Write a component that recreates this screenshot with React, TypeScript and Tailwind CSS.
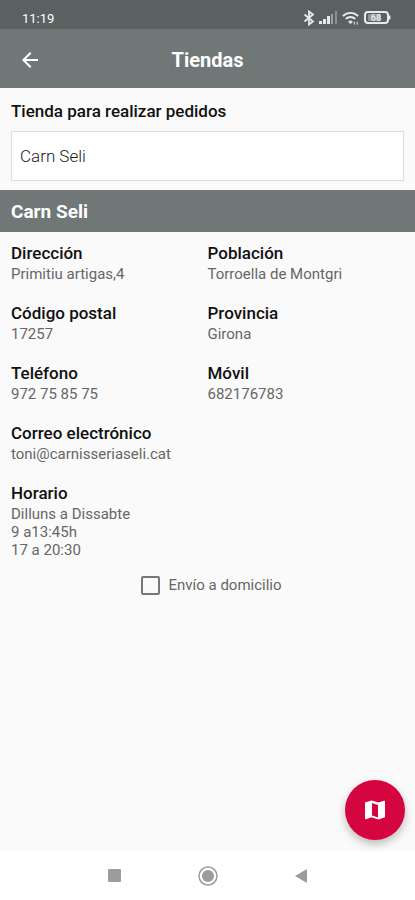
import { ReactNode } from "react";
import { MdArrowBack } from "react-icons/md";

type FieldProps = {
  label: string;
  children: ReactNode;
};

function Field({ label, children }: FieldProps) {
  return (
    <div>
      <dt className="text-[17px] leading-6 font-medium text-[#111111]">{label}</dt>
      <dd className="text-[15px] leading-[18px] text-[#666666]">{children}</dd>
    </div>
  );
}

function StatusBar() {
  return (
    <div className="flex h-[29px] items-end justify-between bg-[#5a6161] pr-[23px] pb-px pl-[22px] text-white">
      <span className="text-[13px] leading-[18px]">11:19</span>
      <div className="flex h-5 items-center gap-1 text-[#e8ebeb]">
        <svg width="12" height="16" viewBox="0 0 12 16" fill="none" stroke="currentColor" strokeWidth="1.800">
          <path d="M1.500 4.500L10 11.500 6 14.500V1.500L10 4.500 1.500 11.500" />
        </svg>
        <svg width="18" height="14" viewBox="0 0 18 14" fill="currentColor">
          <rect x="0" y="10" width="3" height="3" />
          <rect x="4" y="8" width="3" height="5" />
          <rect x="8" y="5" width="3" height="8" />
          <rect x="12" y="3" width="2" height="10" opacity="0.45" />
          <rect x="16" y="0" width="2" height="13" opacity="0.35" />
        </svg>
        <svg width="19" height="16" viewBox="0 0 20 16" fill="none" stroke="currentColor" strokeWidth="2">
          <path d="M2 6c4.500-4.500 11.500-4.500 16 0" />
          <path d="M5 9c2.800-2.800 7.200-2.800 10 0" />
          <path d="M8 12c1.200-1.200 2.800-1.200 4 0l-2 2z" fill="currentColor" strokeWidth="1" />
          <path d="M14 12v3M17 12v3" strokeWidth="1" />
        </svg>
        <svg width="28" height="14" viewBox="0 0 28 14" fill="none">
          <rect x="1" y="1" width="23" height="11" rx="3" stroke="currentColor" strokeWidth="2" />
          <rect x="4" y="3" width="13" height="7" rx="1" fill="#8f9696" />
          <path d="M25.500 4.500v4" stroke="currentColor" strokeWidth="2" />
          <text x="12" y="10" textAnchor="middle" fill="currentColor" fontSize="9" fontWeight="700">
            68
          </text>
        </svg>
      </div>
    </div>
  );
}

function MapIcon() {
  return (
    <svg width="22" height="22" viewBox="0 0 22 22" fill="currentColor" aria-hidden="true">
      <path
        fillRule="evenodd"
        d="M1 3.500L7.500 1.500l7 2L20 1.700q1-.3 1 .7V18.300L14.500 20.500l-7-2.200L2 20.300q-1 .3-1-.7zM8 4v12.500l6 2V6z"
      />
    </svg>
  );
}

function NavigationBar() {
  return (
    <nav className="flex h-[49px] items-center justify-center gap-[73px] bg-white text-[#9c9c9c]">
      <button type="button" aria-label="Recientes" className="flex w-5 justify-center">
        <span className="h-[13px] w-[13px] rounded-[1px] bg-current" />
      </button>
      <button type="button" aria-label="Inicio">
        <svg width="20" height="20" viewBox="0 0 20 20">
          <circle cx="10" cy="10" r="9" fill="none" stroke="currentColor" strokeWidth="1.500" />
          <circle cx="10" cy="10" r="6" fill="currentColor" />
        </svg>
      </button>
      <button type="button" aria-label="Atrás" className="flex w-5 justify-center">
        <svg width="14" height="16" viewBox="0 0 14 16" fill="currentColor">
          <path d="M13 1v14L1 8z" />
        </svg>
      </button>
    </nav>
  );
}

export default function App() {
  return (
    <div className="flex min-h-screen flex-col bg-[#fafafa] font-['Roboto',sans-serif]">
      <StatusBar />
      <header className="grid h-[59px] grid-cols-[1fr_auto_1fr] items-center bg-[#6f7777] px-[18px] pt-[2px] text-white">
        <button type="button" aria-label="Volver" className="justify-self-start">
          <MdArrowBack className="h-6 w-6" />
        </button>
        <h1 className="text-xl leading-6 font-bold">Tiendas</h1>
      </header>

      <main className="relative flex-1">
        <div className="px-[11px] pt-[11px] pb-[9px]">
          <label htmlFor="tienda" className="block text-[17px] leading-6 font-medium text-[#111111]">
            Tienda para realizar pedidos
          </label>
          <select
            id="tienda"
            className="mt-2 block h-[50px] w-full appearance-none border border-[#dddddd] bg-white px-2 pt-px text-[17px] font-light text-[#222222]"
          >
            <option>Carn Seli</option>
          </select>
        </div>

        <h2 className="bg-[#6f7777] px-[11px] pt-[10px] pb-2 text-[19px] leading-6 font-bold text-white">Carn Seli</h2>

        <dl className="grid grid-cols-2 gap-y-[18px] px-[11px] pt-[9px]">
          <Field label="Dirección">Primitiu artigas,4</Field>
          <Field label="Población">Torroella de Montgri</Field>
          <Field label="Código postal">17257</Field>
          <Field label="Provincia">Girona</Field>
          <Field label="Teléfono">972 75 85 75</Field>
          <Field label="Móvil">682176783</Field>
          <div className="col-span-2">
            <Field label="Correo electrónico">toni@carnisseriaseli.cat</Field>
          </div>
          <div className="col-span-2">
            <Field label="Horario">
              Dilluns a Dissabte
              <br />
              9 a13:45h
              <br />
              17 a 20:30
            </Field>
          </div>
        </dl>

        <div className="mt-4 flex items-center justify-center gap-2 pl-2">
          <input
            id="envio"
            type="checkbox"
            className="h-[19px] w-[19px] appearance-none rounded-[2px] border-2 border-[#777777] checked:bg-[#777777]"
          />
          <label htmlFor="envio" className="text-[15px] leading-5 text-[#666666]">
            Envío a domicilio
          </label>
        </div>

        <button
          type="button"
          aria-label="Ver mapa"
          className="absolute right-[10px] bottom-[11px] flex h-[60px] w-[60px] items-center justify-center rounded-full bg-[#d5063f] text-white shadow-[0_4px_8px_rgba(0,0,0,0.25)]"
        >
          <MapIcon />
        </button>
      </main>
      <NavigationBar />
    </div>
  );
}
